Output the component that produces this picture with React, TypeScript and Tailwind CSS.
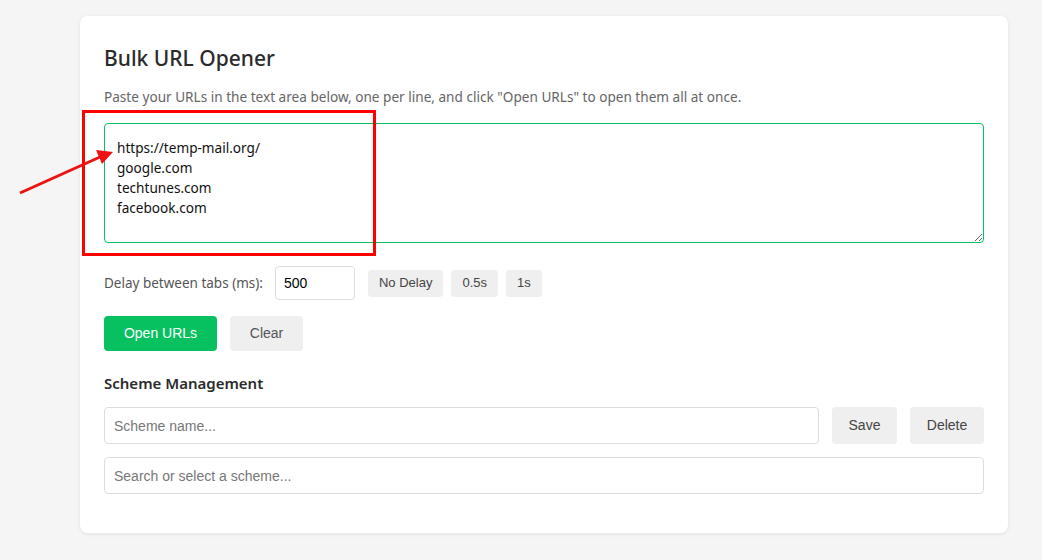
import React from 'react';

const ui = { fontFamily: '"Segoe UI", "Noto Sans", sans-serif' };
const arial = { fontFamily: '"Liberation Sans", Arial, sans-serif' };

export default function App() {
  return (
    <div className="relative min-h-[560px] w-full bg-[#f5f5f5] pt-4" style={ui}>
      <div className="ml-[80px] w-[928px] rounded-lg bg-white px-6 pt-7 pb-[39px] shadow-[0_1px_4px_rgba(0,0,0,0.08)]">
        <h1 className="text-[21px] leading-7 font-medium text-[#2b2b2b]">Bulk URL Opener</h1>
        <p className="mt-[15px] text-[13.6px] leading-5 text-[#666]">
          Paste your URLs in the text area below, one per line, and click "Open URLs" to open them all at once.
        </p>

        <textarea
          className="mt-4 block h-[120px] w-full resize-y rounded border border-[#07c160] px-3 pt-[14px] text-[13.6px] leading-5 text-[#111] outline-none"
          style={ui}
          defaultValue={'https://temp-mail.org/\ngoogle.com\ntechtunes.com\nfacebook.com'}
        />

        {/* delay */}
        <div className="mt-[23px] flex items-center">
          <label className="text-[13.5px] text-[#555]">Delay between tabs (ms):</label>
          <input
            className="ml-3 h-[34px] w-[80px] rounded border border-[#ddd] px-2 text-[14px] text-black outline-none"
            style={arial}
            defaultValue="500"
          />
          <div className="ml-[13px] flex gap-2" style={arial}>
            {['No Delay', '0.5s', '1s'].map((t) => (
              <button key={t} className="h-[27px] rounded bg-[#efefef] px-[11px] text-[13px] text-[#444]">
                {t}
              </button>
            ))}
          </div>
        </div>

        <div className="mt-4 flex gap-[13px]" style={arial}>
          <button className="h-[35px] w-[113px] rounded bg-[#07c160] text-[14px] text-white">Open URLs</button>
          <button className="h-[35px] w-[73px] rounded bg-[#efefef] text-[14px] text-[#555]">Clear</button>
        </div>

        <h2 className="mt-[22px] text-[15px] leading-5 font-semibold text-[#2b2b2b]">Scheme Management</h2>

        <div className="mt-[14px] flex gap-[13px]" style={arial}>
          <input
            className="h-[37px] flex-1 rounded border border-[#ddd] px-[9px] text-[14px] outline-none placeholder:text-[#777]"
            placeholder="Scheme name..."
          />
          <button className="h-[37px] w-[65px] rounded bg-[#efefef] text-[14px] text-[#444]">Save</button>
          <button className="h-[37px] w-[74px] rounded bg-[#efefef] text-[14px] text-[#444]">Delete</button>
        </div>

        <input
          className="mt-[13px] block h-[37px] w-full rounded border border-[#ddd] px-[9px] text-[14px] outline-none placeholder:text-[#777]"
          style={arial}
          placeholder="Search or select a scheme..."
        />
      </div>

      {/* annotation overlay */}
      <div className="pointer-events-none absolute left-[82px] top-[110px] h-[146px] w-[294px] border-[3px] border-[#ff0000]" />
      <svg className="pointer-events-none absolute left-0 top-0" width="1042" height="560">
        <line x1="20" y1="193" x2="100" y2="157" stroke="#ee1111" strokeWidth="3" />
        <polygon points="113,152 96,150 102,164" fill="#ee1111" />
      </svg>
    </div>
  );
}
